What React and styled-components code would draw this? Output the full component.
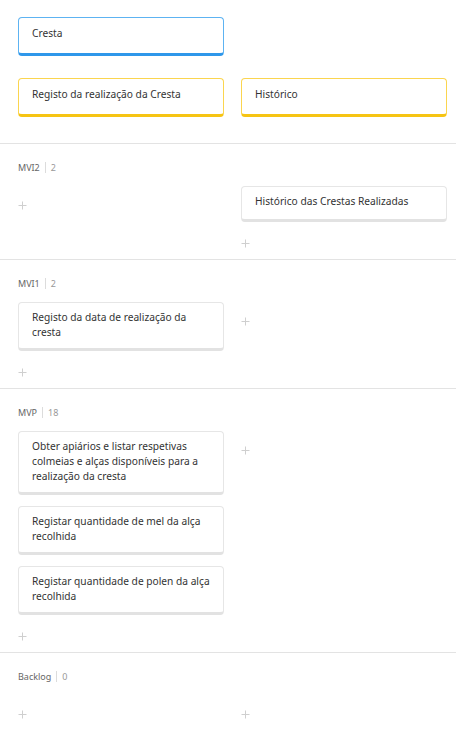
import React from "react";
import styled, { createGlobalStyle } from "styled-components";

const GlobalStyle = createGlobalStyle`
  html, body { margin: 0; padding: 0; background: #ffffff; }
  body { font-family: "Noto Sans", "Open Sans", sans-serif; }
`;

const Page = styled.div`
  width: 456px;
  min-height: 752px;
  background: #fff;
`;

const Section = styled.section`
  padding: ${(p) => (p.$top ? "17px 0 26px" : "16px 0 0")};
  border-bottom: ${(p) => (p.$last ? "none" : "1px solid #e3e3e3")};
`;

const Grid = styled.div`
  display: grid;
  grid-template-columns: 206px 206px;
  column-gap: 17px;
  row-gap: 22px;
  padding: 0 18px;
`;

const Column = styled.div`
  display: flex;
  flex-direction: column;
  gap: 11px;
`;

const ColorCard = styled.div`
  box-sizing: border-box;
  background: #fff;
  border: 1px solid ${(p) => p.$edge};
  border-bottom: 3px solid ${(p) => p.$main};
  border-radius: 4px;
  padding: 8px 13px 12px;
  font-size: 10.2px;
  line-height: 15px;
  color: #333;
`;

const Card = styled.div`
  box-sizing: border-box;
  background: #fff;
  border: 1px solid #e6e6e6;
  border-bottom: 3px solid #e2e2e2;
  border-radius: 4px;
  padding: 7px 12px 8px 13px;
  min-height: 36px;
  font-size: 10.2px;
  line-height: 15px;
  color: #333;
`;

const AddZone = styled.div`
  box-sizing: border-box;
  height: 35px;
  padding-top: 15px;
  margin-top: ${(p) => (p.$afterCard ? "-9px" : "0")};
  line-height: 0;
`;

const Header = styled.div`
  display: flex;
  align-items: center;
  height: 14px;
  padding: 0 18px;
  margin-bottom: 12px;
  font-size: 9px;
  color: #666;
`;

const Sep = styled.span`
  display: inline-block;
  width: 1px;
  height: 11px;
  background: #dcdcdc;
  margin: 0 5px;
`;

const Count = styled.span`
  color: #999;
`;

const Plus = () => (
  <svg width="9" height="9" viewBox="0 0 9 9">
    <path d="M4.5 0.5v8M0.5 4.5h8" stroke="#cfcfcf" strokeWidth="1" fill="none" />
  </svg>
);

const Lane = ({ cards }) => (
  <Column>
    {cards.map((c, i) => (
      <Card key={i}>{c}</Card>
    ))}
    <AddZone $afterCard={cards.length > 0}>
      <Plus />
    </AddZone>
  </Column>
);

const releases = [
  {
    name: "MVI2",
    count: 2,
    left: [],
    right: ["Histórico das Crestas Realizadas"],
  },
  {
    name: "MVI1",
    count: 2,
    left: ["Registo da data de realização da cresta"],
    right: [],
  },
  {
    name: "MVP",
    count: 18,
    left: [
      "Obter apiários e listar respetivas colmeias e alças disponíveis para a realização da cresta",
      "Registar quantidade de mel da alça recolhida",
      "Registar quantidade de polen da alça recolhida",
    ],
    right: [],
  },
  { name: "Backlog", count: 0, left: [], right: [] },
];

export default function App() {
  return (
    <Page>
      <GlobalStyle />
      <Section $top>
        <Grid>
          <ColorCard $edge="#5db3f2" $main="#2f97ea">Cresta</ColorCard>
          <div />
          <ColorCard $edge="#fbd54f" $main="#f6c413">Registo da realização da Cresta</ColorCard>
          <ColorCard $edge="#fbd54f" $main="#f6c413">Histórico</ColorCard>
        </Grid>
      </Section>
      {releases.map((r, i) => (
        <Section key={r.name} $last={i === releases.length - 1}>
          <Header>
            {r.name}
            <Sep />
            <Count>{r.count}</Count>
          </Header>
          <Grid>
            <Lane cards={r.left} />
            <Lane cards={r.right} />
          </Grid>
        </Section>
      ))}
    </Page>
  );
}
